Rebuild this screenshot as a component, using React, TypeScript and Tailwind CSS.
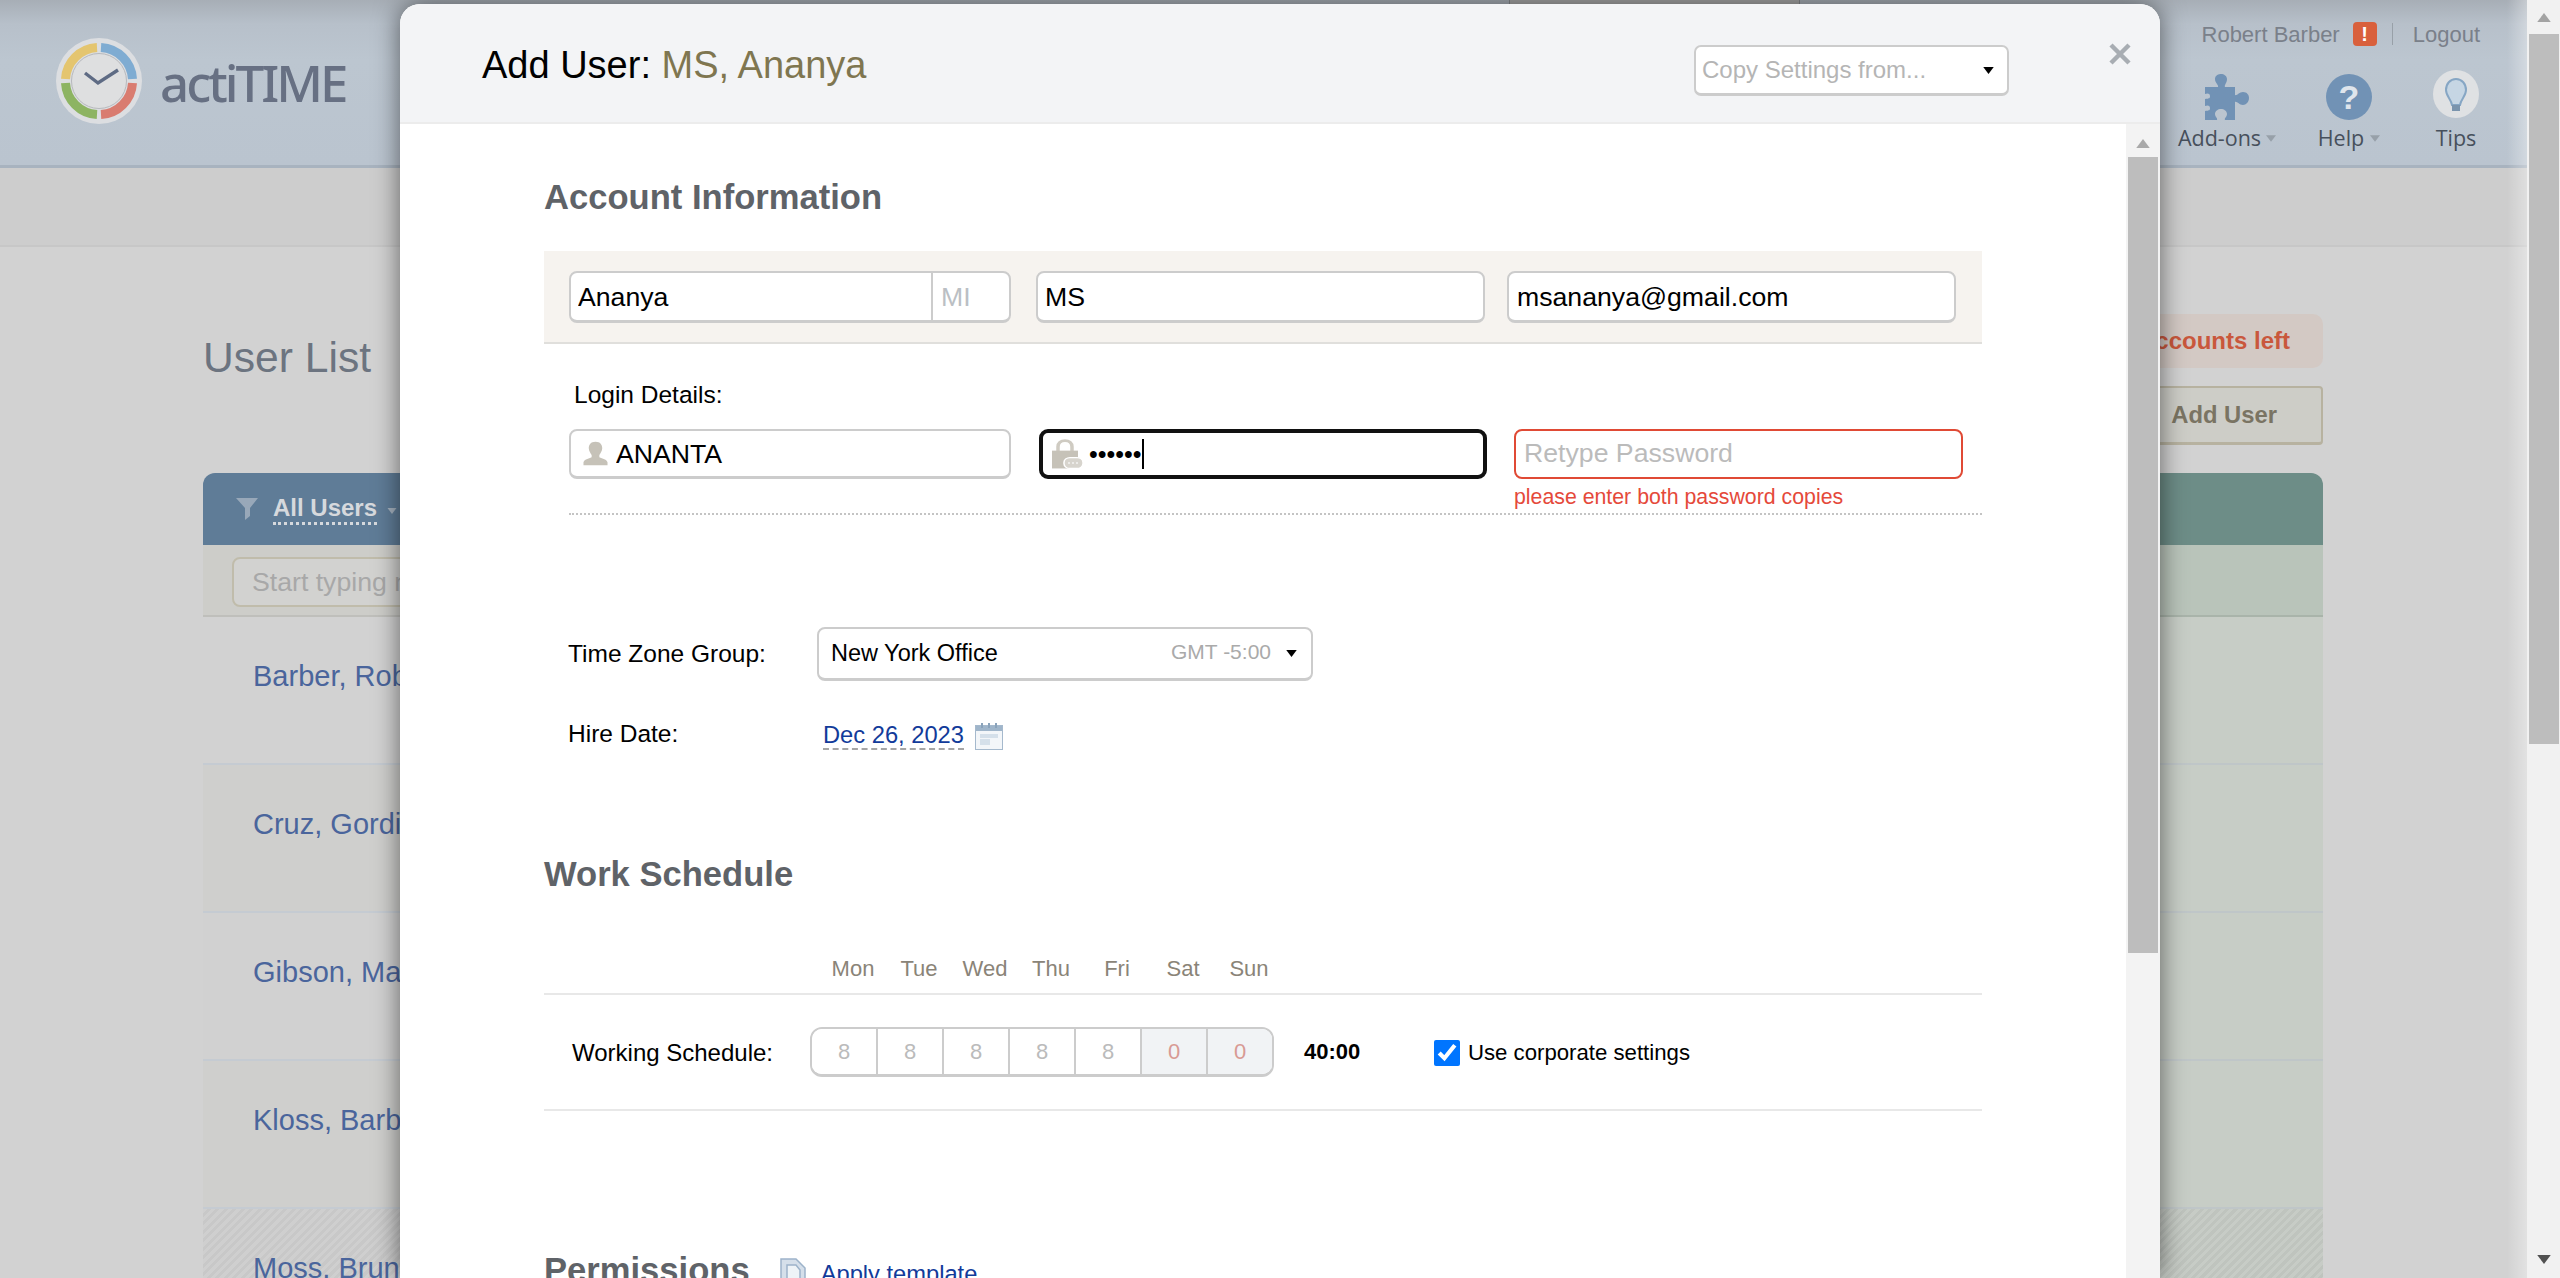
import React from "react";

function Caret({ className }: { className: string }) {
  return (
    <svg viewBox="0 0 12 8" className={className}>
      <polygon points="0,0 12,0 6,8" fill="currentColor" />
    </svg>
  );
}

function Logo() {
  return (
    <svg viewBox="-45 -45 90 90" className="w-[90px] h-[90px] shrink-0">
      <circle cx="0" cy="0" r="43" fill="#dcdee1" />
      <g fill="none" strokeWidth="9">
        <path d="M2 -33.5 A33.5 33.5 0 0 1 33.5 -2" stroke="#7facd2" />
        <path d="M33.5 2 A33.5 33.5 0 0 1 2 33.5" stroke="#d97c70" />
        <path d="M-2 33.5 A33.5 33.5 0 0 1 -33.5 2" stroke="#8db462" />
        <path d="M-33.5 -2 A33.5 33.5 0 0 1 -2 -33.5" stroke="#e4c56f" />
      </g>
      <circle cx="0" cy="0" r="27.5" fill="#dedfe0" stroke="#b7b9bd" strokeWidth="1" />
      <path d="M-14 -8 L-1 2 L19 -11" fill="none" stroke="#5e6b84" strokeWidth="3.4" />
    </svg>
  );
}

function Puzzle() {
  return (
    <svg viewBox="0 0 44 46" className="w-[44px] h-[46px]">
      <path
        d="M0 13 H13 C14 11 10 9 10 5 C10 1 14 0 16 0 C19 0 22 2 22 5 C22 9 19 11 20 13 H30 V21 C32 22 34 18 38 18 C42 18 44 21 44 24 C44 28 41 31 38 31 C34 31 32 27 30 28 V46 H20 C19 44 22 43 22 40 C22 37 19 35 16 35 C13 35 10 37 10 40 C10 43 13 44 12 46 H0 V37 C2 36 5 38 5 34 C5 31 2 31 0 32 V25 C2 24 5 26 5 22 C5 19 2 19 0 20 Z"
        fill="#7192b5"
      />
    </svg>
  );
}

function Bulb() {
  return (
    <svg viewBox="0 0 48 48" className="w-[48px] h-[48px]">
      <ellipse cx="24" cy="24" rx="23" ry="24" fill="#dfe1e3" />
      <path
        d="M24 9 C18 9 14 14 14 20 C14 26 19 29 20 35 H28 C29 29 34 26 34 20 C34 14 30 9 24 9 Z"
        fill="#c6d6e4"
        stroke="#86a6c4"
        strokeWidth="2"
      />
      <rect x="20" y="35" width="8" height="6" fill="#7a94ad" />
    </svg>
  );
}

function PersonIcon() {
  return (
    <svg viewBox="0 0 26 34" preserveAspectRatio="none" className="w-[25px] h-[25px] shrink-0">
      <path
        d="M13 1 C8 1 6 5 6 10 C6 14 8 17 9 19 V22 C6 24 1 25 0.5 29 V33 H25.5 V29 C25 25 20 24 17 22 V19 C18 17 20 14 20 10 C20 5 18 1 13 1 Z"
        fill="#c6c2b8"
      />
    </svg>
  );
}

function LockIcon() {
  return (
    <svg viewBox="0 0 33 40" preserveAspectRatio="none" className="w-[33px] h-[31px] shrink-0">
      <path d="M7 16 V10 C7 5 10 2 14 2 C18 2 21 5 21 10 V16" fill="none" stroke="#cfcbc2" strokeWidth="3.5" />
      <rect x="1" y="15" width="26" height="23" fill="#c6c2b8" />
      <rect x="13" y="24" width="19" height="14" rx="6" fill="#d7d4cd" stroke="#ffffff" strokeWidth="1.5" />
      <circle cx="18" cy="31" r="1" fill="#fff" />
      <circle cx="22" cy="31" r="1" fill="#fff" />
      <circle cx="26" cy="31" r="1" fill="#fff" />
    </svg>
  );
}

function CalendarIcon() {
  return (
    <svg viewBox="0 0 28 28" className="w-[28px] h-[28px] ml-[11px] shrink-0">
      <rect x="0.5" y="3.5" width="27" height="24" fill="#f3f6f9" stroke="#a5b9cd" />
      <rect x="1" y="4" width="26" height="5" fill="#9fb5ca" />
      <rect x="6" y="1" width="2" height="5" fill="#8aa3bb" />
      <rect x="13" y="1" width="2" height="5" fill="#8aa3bb" />
      <rect x="20" y="1" width="2" height="5" fill="#8aa3bb" />
      <rect x="5" y="12" width="18" height="4" fill="#d5e0ea" />
      <rect x="5" y="17" width="10" height="6" fill="#d5e0ea" />
    </svg>
  );
}

function TemplateIcon() {
  return (
    <svg viewBox="0 0 26 32" className="w-[26px] h-[32px] shrink-0">
      <path d="M1 1 H16 L25 10 V31 H1 Z" fill="#d5dfea" stroke="#9db3ca" strokeWidth="1.5" />
      <path d="M7 7 H16 L20 12 V31 H7 Z" fill="#eef3f7" stroke="#9db3ca" strokeWidth="1.5" />
    </svg>
  );
}

function FilterIcon() {
  return (
    <svg viewBox="0 0 22 22" className="w-[22px] h-[22px] shrink-0">
      <polygon points="0,0 22,0 14,10 14,18 9,22 9,10" fill="#98a8b9" />
    </svg>
  );
}

const fieldBox =
  "bg-white border-2 border-b-[3px] border-[#cccccc] rounded-[8px] flex items-center";
const fieldInput =
  "w-full min-w-0 bg-transparent outline-none text-[26.67px] text-black placeholder:text-[#bbbbbb]";

const users = [
  { name: "Barber, Robert", hatch: false, tone: "bg-[#d2d2d2]" },
  { name: "Cruz, Gordi", hatch: false, tone: "bg-[#cfcfcd]" },
  { name: "Gibson, Mary", hatch: false, tone: "bg-[#d1d1d1]" },
  { name: "Kloss, Barbara", hatch: false, tone: "bg-[#cfcfcd]" },
  { name: "Moss, Bruno", hatch: true, tone: "" },
];

const days = ["Mon", "Tue", "Wed", "Thu", "Fri", "Sat", "Sun"];
const hours = ["8", "8", "8", "8", "8", "0", "0"];

function BackgroundPage() {
  return (
    <div className="relative flex-1 min-w-0 flex flex-col bg-[#d2d2d2]">
      <header className="h-[168px] shrink-0 flex border-b-[3px] border-[#a8b3bf] bg-[linear-gradient(180deg,#a7aeb6_0px,#b7c0ca_24px,#bcc6d0_60px,#bac4cf_100%)]">
        <div className="flex items-center pl-[54px] pb-[3px] w-[345px] shrink-0">
          <Logo />
          <span className="ml-[16px] mt-[2px] font-['Noto_Sans'] text-[51px] font-medium leading-none tracking-[-3px] text-[#677083]">
            actiTIME
          </span>
        </div>
        <div className="ml-[1164px] w-[291px] h-[40px] shrink-0 bg-[#a8a8a8] border-x border-[#85888c]" />
        <div className="ml-auto w-[348px] shrink-0 flex flex-col">
          <div className="mt-[20px] h-[28px] flex items-center justify-end pr-[47px] text-[22px] text-[#7a808a]">
            <span>Robert Barber</span>
            <span className="ml-[13px] w-[24px] h-[24px] rounded-[4px] bg-[#d9603c] text-white font-bold flex items-center justify-center text-[20px]">
              !
            </span>
            <span className="ml-[15px] w-[1px] h-[22px] bg-[#98a0a8]" />
            <span className="ml-[20px]">Logout</span>
          </div>
          <div className="mt-[22px] flex text-[21.5px] font-['Open_Sans'] text-[#47505c]">
            <div className="w-[96px] flex flex-col items-center">
              <div className="h-[50px] flex items-end">
                <Puzzle />
              </div>
              <div className="mt-[4px] h-[28px] flex items-center whitespace-nowrap leading-none">
                Add-ons
                <Caret className="ml-[5px] w-[10px] h-[7px] text-[#97a0a9]" />
              </div>
            </div>
            <div className="ml-[43px] w-[62px] flex flex-col items-center">
              <div className="h-[50px] flex items-end">
                <div className="w-[46px] h-[46px] rounded-full bg-[#7192b5] text-[#dfe5ec] font-bold font-['Liberation_Sans'] text-[34px] flex items-center justify-center">
                  ?
                </div>
              </div>
              <div className="mt-[4px] h-[28px] flex items-center whitespace-nowrap leading-none">
                Help
                <Caret className="ml-[6px] w-[10px] h-[7px] text-[#97a0a9]" />
              </div>
            </div>
            <div className="ml-[56px] w-[40px] flex flex-col items-center">
              <div className="h-[50px] flex items-start">
                <Bulb />
              </div>
              <div className="mt-[4px] h-[28px] flex items-center leading-none">Tips</div>
            </div>
          </div>
        </div>
      </header>

      <div className="h-[79px] shrink-0 bg-[#cdcdcd] border-b-2 border-[#c7c7c7]" />

      <main className="pl-[203px] w-[2323px] flex flex-col">
        <div className="flex justify-between">
          <h1 className="mt-[85px] h-[50px] leading-[50px] text-[42.6px] font-normal text-[#6c7480]">User List</h1>
          <div className="mt-[67px] flex flex-col items-end">
            <div className="h-[54px] w-[600px] pr-[33px] rounded-[10px] bg-[#d3c9c4] flex items-center justify-end text-[24px] font-bold text-[#c9573c]">
              No user accounts left
            </div>
            <div className="mt-[18px] h-[59px] w-[300px] pr-[44px] rounded-[4px] bg-[#cdcdc7] border-2 border-b-[3px] border-[#b7b2a0] flex items-center justify-end text-[23.8px] font-bold text-[#7a7463]">
              Add User
            </div>
          </div>
        </div>

        <div className="mt-[28px] flex h-[72px] rounded-t-[12px] overflow-hidden">
          <div className="w-[1000px] bg-[#5f7c97] flex items-center pl-[33px]">
            <FilterIcon />
            <span className="ml-[15px] text-[24px] font-bold text-[#d6d9dd] border-b-[3px] border-dotted border-[#d6d9dd] leading-[28px]">
              All Users
            </span>
            <Caret className="ml-[10px] mt-[3px] w-[10px] h-[6px] text-[#a4b1be]" />
          </div>
          <div className="flex-1 bg-[#6d8d87]" />
        </div>
        <div className="flex h-[72px]">
          <div className="w-[1000px] bg-[#cdcdc9] border-b-2 border-[#bfbfbb] pl-[29px] pt-[12px]">
            <div className="h-[50px] w-[500px] rounded-[8px] border-2 border-[#c0bcab] bg-[#d2d2d0] pl-[18px] flex items-center text-[26.67px] text-[#a8a8a8]">
              Start typing name
            </div>
          </div>
          <div className="flex-1 bg-[#b9c4ba] border-b-2 border-[#a9b4aa]" />
        </div>

        {users.map((u) => (
          <div key={u.name} className="flex h-[148px] shrink-0">
            <div
              className={`w-[1000px] pl-[50px] pt-[43px] text-[29px] leading-[32px] text-[#4a659c] border-b-2 border-[#c5cbd2] ${
                u.hatch
                  ? "bg-[repeating-linear-gradient(135deg,#cfcfcf_0px,#cfcfcf_3px,#c8c8c8_3px,#c8c8c8_6px)]"
                  : u.tone
              }`}
            >
              {u.name}
            </div>
            <div
              className={`flex-1 border-b-2 border-[#bfc6c8] ${
                u.hatch
                  ? "bg-[repeating-linear-gradient(135deg,#c7ccc6_0px,#c7ccc6_3px,#bfc4be_3px,#bfc4be_6px)]"
                  : "bg-[#c7cdc6]"
              }`}
            />
          </div>
        ))}
      </main>

      <div className="absolute top-0 bottom-0 right-0 w-[20px] bg-[linear-gradient(90deg,rgba(255,255,255,0),rgba(255,255,255,0.35))]" />
    </div>
  );
}

function Modal() {
  return (
    <div className="absolute left-[400px] top-[4px] bottom-0 w-[1760px] flex flex-col rounded-t-[20px] overflow-hidden bg-white shadow-[0_0_26px_rgba(0,0,0,0.55)]">
      <div className="h-[120px] shrink-0 bg-[#f3f4f6] border-b-2 border-[#ececec] flex items-start">
        <h2 className="ml-[82px] mt-[39px] text-[38px] leading-[44px] font-normal text-black whitespace-nowrap">
          Add User: <span className="text-[#7f7650]">MS, Ananya</span>
        </h2>
        <div className="ml-auto mt-[41px] w-[315px] h-[51px] bg-white border-2 border-b-[3px] border-[#cccccc] rounded-[7px] flex items-center pl-[6px] pr-[13px] text-[24px] text-[#b5b5b5]">
          <span>Copy Settings from...</span>
          <Caret className="ml-auto w-[11px] h-[7px] text-black" />
        </div>
        <div className="ml-[94px] mr-[23px] mt-[30px] h-[40px] w-[34px] flex items-center justify-center text-[#a8adb3]">
          <svg viewBox="0 0 24 24" className="w-[24px] h-[24px]">
            <path d="M3 3 L21 21 M21 3 L3 21" stroke="currentColor" strokeWidth="4.5" fill="none" />
          </svg>
        </div>
      </div>

      <div className="flex-1 min-h-0 flex">
        <div className="flex-1 min-w-0 pl-[144px] overflow-hidden">
          <div className="w-[1438px]">
            <h3 className="mt-[53px] h-[40px] leading-[40px] text-[34.6px] font-bold text-[#5f6368]">Account Information</h3>

            <div className="mt-[34px] h-[93px] bg-[#f6f3ef] border-b-2 border-[#e0dfdc] pl-[25px] pt-[20px] flex items-start">
              <div className={`${fieldBox} w-[442px] h-[52px]`}>
                <input readOnly value="Ananya" className={`${fieldInput} pl-[7px] flex-1`} />
                <div className="w-[78px] h-full shrink-0 border-l-2 border-[#cccccc] pl-[8px] flex items-center text-[26.67px] text-[#bbbfc4]">
                  MI
                </div>
              </div>
              <div className={`${fieldBox} ml-[25px] w-[449px] h-[52px] px-[7px]`}>
                <input readOnly value="MS" className={fieldInput} />
              </div>
              <div className={`${fieldBox} ml-[22px] w-[449px] h-[52px] px-[8px]`}>
                <input readOnly value="msananya@gmail.com" className={fieldInput} />
              </div>
            </div>

            <div className="mt-[36px] ml-[30px] h-[30px] leading-[30px] text-[24.5px] text-black">Login Details:</div>

            <div className="mt-[19px] ml-[25px] h-[86px] border-b-2 border-dotted border-[#c4c4c4] flex items-start">
              <div className={`${fieldBox} w-[442px] h-[50px] pl-[12px]`}>
                <PersonIcon />
                <input readOnly value="ANANTA" className={`${fieldInput} ml-[8px]`} />
              </div>
              <div className="ml-[28px] w-[448px] h-[50px] bg-white border-[4px] border-[#111111] rounded-[9px] flex items-center pl-[8px]">
                <LockIcon />
                <span className="ml-[5px] text-[25px] leading-none text-black">••••••</span>
                <span className="w-[2px] h-[30px] bg-black" />
              </div>
              <div className="ml-[27px] w-[449px] flex flex-col">
                <div className="h-[50px] bg-white border-2 border-[#e04a35] rounded-[8px] flex items-center pl-[8px]">
                  <input readOnly placeholder="Retype Password" className={fieldInput} />
                </div>
                <div className="mt-[5px] h-[26px] leading-[26px] text-[21.3px] text-[#e5493a] whitespace-nowrap">
                  please enter both password copies
                </div>
              </div>
            </div>

            <div className="mt-[112px] ml-[24px] flex items-center">
              <div className="w-[249px] text-[24.5px] text-black">Time Zone Group:</div>
              <div className="w-[496px] h-[54px] bg-white border-2 border-b-[3px] border-[#cccccc] rounded-[8px] flex items-center pl-[12px] pr-[14px]">
                <span className="text-[23.5px] text-black mt-[1px]">New York Office</span>
                <span className="ml-auto text-[21px] text-[#aaaaaa] -mt-[4px]">GMT -5:00</span>
                <Caret className="ml-[15px] w-[11px] h-[7px] text-black" />
              </div>
            </div>

            <div className="mt-[41px] ml-[24px] flex items-start h-[28px]">
              <div className="w-[255px] text-[24.5px] leading-[24px] text-black">Hire Date:</div>
              <span className="h-[28px] text-[23.7px] leading-[26px] text-[#123b9a] border-b-2 border-dashed border-[#a6a6a6]">
                Dec 26, 2023
              </span>
              <CalendarIcon />
            </div>

            <h3 className="mt-[104px] h-[40px] leading-[40px] text-[34.6px] font-bold text-[#5f6368]">Work Schedule</h3>

            <div className="mt-[60px] h-[41px] border-b-2 border-[#e8e8e8] pl-[276px] flex items-start">
              {days.map((d) => (
                <div key={d} className="w-[66px] h-[30px] leading-[30px] text-center text-[22px] text-[#8a8478]">
                  {d}
                </div>
              ))}
            </div>

            <div className="h-[116px] border-b-2 border-[#e8e8e8] pl-[28px] flex items-center">
              <div className="w-[238px] text-[24px] text-black whitespace-nowrap mt-[2px]">Working Schedule:</div>
              <div className="w-[464px] h-[50px] border-2 border-b-[3px] border-[#cccccc] rounded-[12px] overflow-hidden flex">
                {hours.map((h, i) => (
                  <div
                    key={i}
                    className={`flex-1 flex items-center justify-center text-[22px] ${i < 6 ? "border-r-2 border-[#cccccc]" : ""} ${
                      h === "0" ? "bg-[#f1f3f5] text-[#d89a94]" : "bg-white text-[#bbbbbb]"
                    }`}
                  >
                    {h}
                  </div>
                ))}
              </div>
              <div className="ml-[30px] w-[56px] text-[22px] font-bold text-black -mt-[1px]">40:00</div>
              <input type="checkbox" defaultChecked readOnly className="ml-[74px] mt-[2px] w-[26px] h-[26px] shrink-0" />
              <span className="ml-[8px] mt-[2px] text-[22.2px] text-black">Use corporate settings</span>
            </div>

            <div className="mt-[139px] h-[40px] flex items-center">
              <h3 className="text-[34.6px] leading-[40px] font-bold text-[#5f6368]">Permissions</h3>
              <div className="ml-[30px] mt-[8px]">
                <TemplateIcon />
              </div>
              <span className="ml-[15px] mt-[9px] text-[23.7px] text-[#123b9a]">Apply template</span>
            </div>
          </div>
        </div>

        <div className="w-[34px] shrink-0 bg-[#f3f3f3] flex flex-col items-center">
          <Caret className="mt-[15px] w-[16px] h-[9px] rotate-180 text-[#a9a9a9]" />
          <div className="mt-[9px] w-[30px] h-[796px] bg-[#bdbdbd]" />
        </div>
      </div>
    </div>
  );
}

export default function App() {
  return (
    <div className="relative w-[2560px] h-[1278px] overflow-hidden flex font-['Liberation_Sans',Arial,sans-serif]">
      <BackgroundPage />
      <div className="w-[33px] shrink-0 bg-[#f1f1f1] flex flex-col items-center">
        <Caret className="mt-[13px] w-[16px] h-[9px] rotate-180 text-[#a3a3a3]" />
        <div className="mt-[12px] w-[30px] h-[710px] bg-[#bdbdbd]" />
        <Caret className="mt-auto mb-[14px] w-[16px] h-[9px] text-[#505050]" />
      </div>
      <Modal />
    </div>
  );
}
